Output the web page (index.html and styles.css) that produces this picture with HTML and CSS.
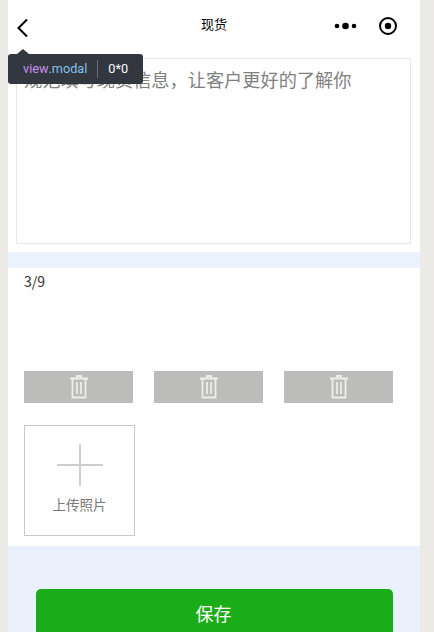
FILE: index.html
```html
<!DOCTYPE html>
<html lang="zh">
<head>
<meta charset="utf-8">
<title>现货</title>
<link rel="stylesheet" href="styles.css">
</head>
<body>
<div class="phone">
  <header class="nav">
    <svg class="back" width="14" height="20" viewBox="0 0 14 20"><path d="M11 1.500 2.500 10 11 18.500" fill="none" stroke="#000" stroke-width="2"/></svg>
    <div class="title">现货</div>
    <div class="capsule">
      <svg width="24" height="8" viewBox="0 0 24 8"><circle cx="3" cy="4" r="2.300"/><circle cx="11.500" cy="4" r="3.300"/><circle cx="20" cy="4" r="2.300"/></svg>
      <svg width="20" height="20" viewBox="0 0 20 20"><circle cx="10" cy="10" r="8" fill="none" stroke="#000" stroke-width="2"/><circle cx="10" cy="10" r="3.200"/></svg>
    </div>
  </header>
  <section class="desc">
    <div class="box">规范填写现货信息<span class="punct">，</span>让客户更好的了解你</div>
  </section>
  <div class="band"></div>
  <section class="photos">
    <div class="count">3/9</div>
    <div class="thumbs">
      <div class="thumb"><svg class="trash" width="20" height="24" viewBox="0 0 20 24"><path d="M1 3.500h18M8 3.500V1h4v2.500M3.500 3.500v19h13v-19M8 7v12M12 7v12" fill="none" stroke="#ededeb" stroke-width="1.800"/></svg></div>
      <div class="thumb"><svg class="trash" width="20" height="24" viewBox="0 0 20 24"><path d="M1 3.500h18M8 3.500V1h4v2.500M3.500 3.500v19h13v-19M8 7v12M12 7v12" fill="none" stroke="#ededeb" stroke-width="1.800"/></svg></div>
      <div class="thumb"><svg class="trash" width="20" height="24" viewBox="0 0 20 24"><path d="M1 3.500h18M8 3.500V1h4v2.500M3.500 3.500v19h13v-19M8 7v12M12 7v12" fill="none" stroke="#ededeb" stroke-width="1.800"/></svg></div>
    </div>
    <div class="upload">
      <svg class="plus" width="48" height="44" viewBox="0 0 48 44"><path d="M1 21h46M24 0v42" stroke="#cdcdcd" stroke-width="2"/></svg>
      <div class="upload-label">上传照片</div>
    </div>
  </section>
  <section class="footer">
    <button class="save">保存</button>
  </section>
</div>
<div class="tip"><span class="tag">view</span><span class="cls">.modal</span><span class="sep"></span><span class="size">0*0</span></div>
</body>
</html>
```
FILE: styles.css
```css
html, body {
  margin: 0;
  height: 632px;
  overflow: hidden;
  background: #ebeae6;
  font-family: "Noto Sans CJK SC", "Liberation Sans", sans-serif;
}
.phone {
  margin-left: 8px;
  width: 412px;
  height: 632px;
  background: #fff;
  overflow: hidden;
}
.nav {
  height: 48px;
  position: relative;
  display: flex;
  align-items: center;
  justify-content: center;
}
.back {
  position: absolute;
  left: 8px;
  top: 18px;
}
.title {
  font-size: 13px;
  color: #000;
  line-height: 18px;
}
.capsule {
  position: absolute;
  right: 22px;
  top: 16px;
  display: flex;
  align-items: center;
  gap: 20px;
}
.desc {
  padding: 10px 9px 8px 8px;
}
.box {
  height: 186px;
  box-sizing: border-box;
  border: 1px solid #e8e8e8;
  padding: 5px 7px;
  font-size: 18.200px;
  line-height: 30px;
  color: #7f7f7f;
}
.punct {
  font-family: "Noto Sans CJK TC", sans-serif;
}
.band {
  height: 16px;
  background: #eaf2fd;
}
.photos {
  height: 278px;
  padding: 0 16px;
  box-sizing: border-box;
}
.count {
  font-size: 14px;
  line-height: 20px;
  padding-top: 3px;
  color: #333;
}
.thumbs {
  display: flex;
  gap: 21px;
  margin-top: 80px;
}
.thumb {
  width: 109px;
  height: 32px;
  background: #bcbcba;
  display: flex;
  align-items: center;
  justify-content: center;
}
.upload {
  margin-top: 22px;
  width: 111px;
  height: 111px;
  box-sizing: border-box;
  border: 1px solid #c8c8c8;
  display: flex;
  flex-direction: column;
  align-items: center;
  padding-top: 18px;
}
.upload-label {
  margin-top: 6px;
  font-size: 13.500px;
  line-height: 20px;
  color: #777;
}
.footer {
  height: 86px;
  background: #eaf1fd;
  padding: 43px 27px 0 28px;
  box-sizing: border-box;
}
.save {
  display: block;
  width: 100%;
  height: 60px;
  border: 0;
  border-radius: 5px;
  background: #1aad19;
  color: #fff;
  font: 18px "Noto Sans CJK SC", sans-serif;
  padding: 0 2px 12px 0;
}
.tip {
  position: absolute;
  left: 8px;
  top: 54px;
  width: 135px;
  height: 30px;
  box-sizing: border-box;
  padding-left: 15px;
  background: #333740;
  border-radius: 3px;
  display: flex;
  align-items: center;
  font: 12.700px/30px "Roboto", "Liberation Sans", sans-serif;
}
.tip::before {
  content: "";
  position: absolute;
  left: 9px;
  top: -5px;
  border: 6px solid transparent;
  border-top: 0;
  border-bottom: 5px solid #333740;
}
.tag { color: #c792ee; }
.cls { color: #85c0ec; }
.sep {
  width: 1px;
  height: 18px;
  background: #6b6e75;
  margin: 0 10px;
}
.size { color: #fff; }
```
